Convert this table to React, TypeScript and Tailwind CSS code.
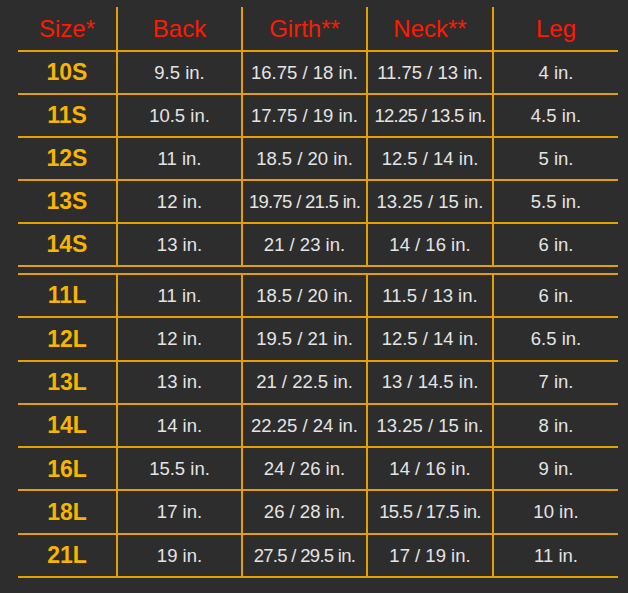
import React from "react";

const sRows = [
  ["10S", "9.5 in.", "16.75 / 18 in.", "11.75 / 13 in.", "4 in."],
  ["11S", "10.5 in.", "17.75 / 19 in.", "12.25 / 13.5 in.", "4.5 in."],
  ["12S", "11 in.", "18.5 / 20 in.", "12.5 / 14 in.", "5 in."],
  ["13S", "12 in.", "19.75 / 21.5 in.", "13.25 / 15 in.", "5.5 in."],
  ["14S", "13 in.", "21 / 23 in.", "14 / 16 in.", "6 in."],
];

const lRows = [
  ["11L", "11 in.", "18.5 / 20 in.", "11.5 / 13 in.", "6 in."],
  ["12L", "12 in.", "19.5 / 21 in.", "12.5 / 14 in.", "6.5 in."],
  ["13L", "13 in.", "21 / 22.5 in.", "13 / 14.5 in.", "7 in."],
  ["14L", "14 in.", "22.25 / 24 in.", "13.25 / 15 in.", "8 in."],
  ["16L", "15.5 in.", "24 / 26 in.", "14 / 16 in.", "9 in."],
  ["18L", "17 in.", "26 / 28 in.", "15.5 / 17.5 in.", "10 in."],
  ["21L", "19 in.", "27.5 / 29.5 in.", "17 / 19 in.", "11 in."],
];

const headers = ["Size*", "Back", "Girth**", "Neck**", "Leg"];

function Row({ cells, h }: { cells: string[]; h: string }) {
  return (
    <div className={`grid grid-cols-[98px_125px_125px_126px_126px] border-b-2 border-[#e3a000] ${h}`}>
      {cells.map((c, i) => (
        <div
          key={i}
          className={
            i === 0
              ? "flex items-center justify-center text-[23px] font-bold text-[#f7b400]"
              : `flex items-center justify-center border-l-2 border-[#e3a000] text-[18.5px] text-[#e4e4e4] whitespace-nowrap ${
                  c.length >= 15 ? "tracking-[-0.7px]" : ""
                }`
          }
        >
          {c}
        </div>
      ))}
    </div>
  );
}

export default function App() {
  return (
    <div className="w-[628px] h-[593px] bg-[#2d2d2d] pt-[7px] pl-[18px] font-['Liberation_Sans',Arial,sans-serif]">
      <div className="w-[600px]">
        <div className="grid grid-cols-[98px_125px_125px_126px_126px] h-[45px] border-b-2 border-[#e3a000]">
          {headers.map((hd, i) => (
            <div
              key={i}
              className={`flex items-center justify-center text-[24px] text-[#ff1a00] ${
                i === 0 ? "" : "border-l-2 border-[#e3a000]"
              }`}
            >
              {hd}
            </div>
          ))}
        </div>
        {sRows.map((r, i) => (
          <Row key={i} cells={r} h="h-[43px]" />
        ))}
        <div className="h-[6px]" />
        <div className="border-t-2 border-[#e3a000]">
          {lRows.map((r, i) => (
            <Row key={i} cells={r} h="h-[43.3px]" />
          ))}
        </div>
      </div>
    </div>
  );
}
